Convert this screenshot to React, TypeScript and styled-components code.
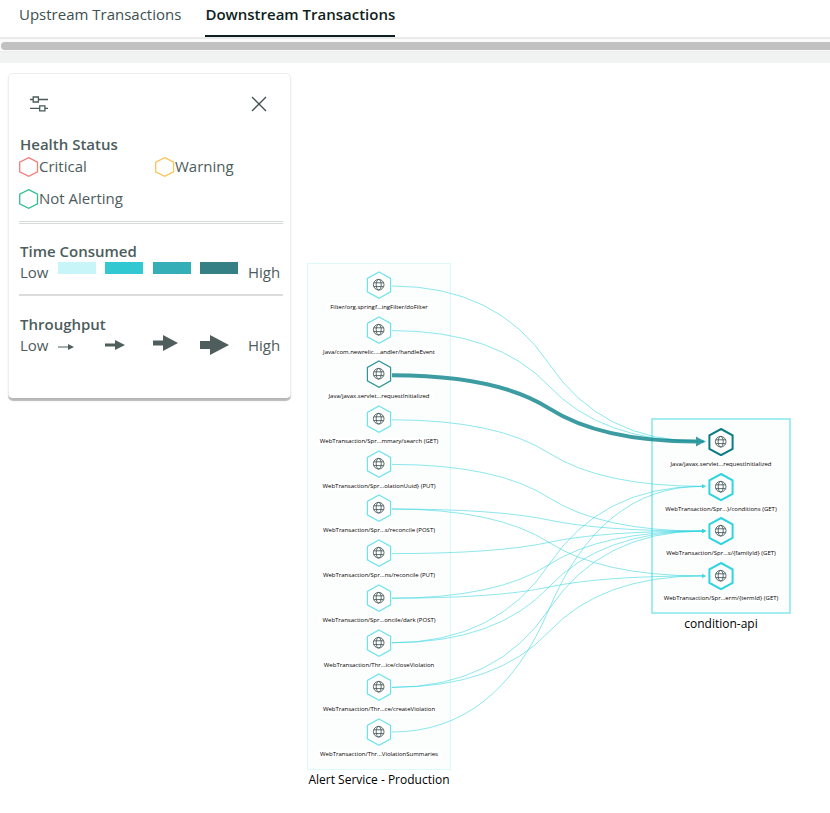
import React from "react";
import styled, { createGlobalStyle } from "styled-components";

const GlobalStyle = createGlobalStyle`
  * { box-sizing: border-box; }
  body {
    margin: 0;
    background: #fff;
    font-family: "Open Sans", "Noto Sans", sans-serif;
    overflow: hidden;
  }
  button { font: inherit; background: none; border: 0; padding: 0; cursor: pointer; }
  h2, p, ul { margin: 0; padding: 0; }
`;

const Page = styled.div`
  display: flex;
  flex-direction: column;
  min-height: 100vh;
`;

const Tabs = styled.nav`
  display: flex;
  gap: 24px;
  height: 39px;
  padding-left: 19px;
  border-bottom: 2px solid #e9ebeb;
`;

const Tab = styled.button<{ $active?: boolean }>`
  && {
    height: 37px;
    padding-bottom: 8px;
    border-bottom: 2px solid ${(p) => (p.$active ? "#0f1e21" : "transparent")};
    color: ${(p) => (p.$active ? "#0f1e21" : "#3d4f4f")};
    font-size: 15px;
    font-weight: ${(p) => (p.$active ? 600 : 400)};
    white-space: nowrap;
  }
`;

const ScrollTrack = styled.div`
  height: 13px;
  padding: 3px 0 2px 1px;
  background: #fafafa;
  border-bottom: 1px solid #ececec;
`;

const ScrollThumb = styled.div`
  height: 8px;
  border-radius: 4px 0 0 4px;
  background: #c1c1c1;
`;

const Strip = styled.div`
  height: 11px;
  background: #f1f3f3;
`;

const Canvas = styled.main`
  position: relative;
  flex: 1;
`;

const Legend = styled.aside`
  position: absolute;
  left: 8px;
  top: 10px;
  width: 283px;
  padding: 11px 7px 43px 10px;
  border: 1px solid #eceeee;
  border-bottom: 1px solid #b4b6b6;
  border-radius: 5px;
  background: #fff;
  box-shadow: 0 2px 1px #b9bbbb;
  color: #4d5c5c;
`;

const LegendHead = styled.div`
  display: flex;
  justify-content: space-between;
  align-items: center;
  height: 38px;
  padding: 0 16px 0 11px;
  margin-bottom: 10px;
`;

const IconButton = styled.button`
  display: flex;
`;

const Section = styled.section<{ $kind: "first" | "middle" | "last" }>`
  padding-top: ${(p) => (p.$kind === "first" ? 0 : p.$kind === "middle" ? 16 : 17)}px;
  padding-bottom: ${(p) => (p.$kind === "last" ? 0 : 12)}px;
  border-bottom: ${(p) =>
    p.$kind === "first" ? "3px double #d5dada" : p.$kind === "middle" ? "2px solid #dcdcdc" : "0"};
`;

const Heading = styled.h2`
  padding-left: 1px;
  font-size: 15px;
  line-height: 22px;
  font-weight: 600;
`;

const StatusGrid = styled.ul`
  display: grid;
  grid-template-columns: 136px 1fr;
  row-gap: 10px;
  list-style: none;
`;

const Status = styled.li`
  display: flex;
  align-items: center;
  height: 22px;
  font-size: 15px;
  line-height: 20px;
  padding-bottom: 1px;
  white-space: nowrap;
  svg { flex: none; margin-top: 2px; }
`;

const Scale = styled.div`
  display: grid;
  grid-template-columns: 38px 47px 48px 47px 48px 1fr;
  height: 20px;
  padding-left: 1px;
  font-size: 15px;
  line-height: 20px;
`;

const Swatch = styled.span<{ $color: string }>`
  width: 38px;
  height: 12px;
  background: ${(p) => p.$color};
`;

const ArrowCell = styled.span`
  display: flex;
  align-items: center;
  height: 20px;
`;

const LowArrowCell = styled(ArrowCell)`
  padding-top: 4px;
`;

const HighArrowCell = styled(ArrowCell)`
  padding-bottom: 4px;
`;

const Edges = styled.svg`
  position: absolute;
  left: 0;
  top: 0;
  pointer-events: none;
`;

const Cluster = styled.section<{ $target?: boolean }>`
  position: absolute;
  left: ${(p) => (p.$target ? 651 : 307)}px;
  top: ${(p) => (p.$target ? 355 : 200)}px;
  width: ${(p) => (p.$target ? 140 : 144)}px;
`;

const ClusterBox = styled.div<{ $target?: boolean }>`
  display: flex;
  flex-direction: column;
  align-items: center;
  justify-content: space-between;
  height: ${(p) => (p.$target ? 196 : 507)}px;
  padding: ${(p) => (p.$target ? "8px 0 10px" : "7px 0 11px")};
  border: ${(p) => (p.$target ? "2px solid #a4ecf0" : "1px solid #dcf8fa")};
  background: #fcfefe;
`;

const ClusterName = styled.p`
  text-align: center;
  color: #000;
  font-size: 12px;
  line-height: 20px;
  white-space: nowrap;
`;

const NodeItem = styled.div`
  display: flex;
  flex-direction: column;
  align-items: center;
  gap: 4px;
`;

const NodeLabel = styled.span`
  padding: 0 3px;
  background: #fff;
  color: #000;
  font-size: 6px;
  line-height: 8px;
  white-space: nowrap;
`;

const sources = [
  "Filter/org.springf...ingFilter/doFilter",
  "Java/com.newrelic....andler/handleEvent",
  "Java/javax.servlet...requestInitialized",
  "WebTransaction/Spr...mmary/search (GET)",
  "WebTransaction/Spr...olationUuid} (PUT)",
  "WebTransaction/Spr...s/reconcile (POST)",
  "WebTransaction/Spr...ns/reconcile (PUT)",
  "WebTransaction/Spr...oncile/dark (POST)",
  "WebTransaction/Thr...ice/closeViolation",
  "WebTransaction/Thr...ce/createViolation",
  "WebTransaction/Thr...ViolationSummaries",
];

const targets = [
  "Java/javax.servlet...requestInitialized",
  "WebTransaction/Spr...}/conditions (GET)",
  "WebTransaction/Spr...s/{familyId} (GET)",
  "WebTransaction/Spr...erm/{termId} (GET)",
];

const links: [number, number][] = [
  [0, 0], [1, 0], [3, 1], [4, 2], [5, 2], [5, 3], [6, 2], [7, 2],
  [7, 3], [8, 1], [8, 2], [9, 2], [9, 3], [10, 1], [2, 0],
];

const sourceY = (i: number) => 223 + i * 44.6;
const targetY = (i: number) => 378.5 + i * 44.8;

function linkPath(from: number, to: number, endX: number) {
  const y0 = sourceY(from);
  const y1 = targetY(to);
  return `M392 ${y0}Q497 ${y0} 549 ${(y0 + y1) / 2}Q601 ${y1} ${endX} ${y1}`;
}

function NodeIcon({ color, width }: { color: string; width: number }) {
  return (
    <svg width="26" height="28" viewBox="0 0 26 28" aria-hidden="true">
      <path
        d="M13 1 24.6 7.4V20.8L13 27.2 1.4 20.8V7.4Z"
        fill="#fff"
        stroke={color}
        strokeWidth={width}
      />
      <g fill="none" stroke="#4a5b5b" strokeWidth="0.9">
        <circle cx="12.7" cy="13.7" r="5.3" />
        <ellipse cx="12.7" cy="13.7" rx="2.5" ry="5.3" />
        <path d="M7.8 11.8H17.6M7.8 15.6H17.6" />
      </g>
    </svg>
  );
}

function StatusIcon({ color }: { color: string }) {
  return (
    <svg width="20" height="20" viewBox="0 0 20 20" aria-hidden="true">
      <path d="M9.7 .7 18.5 5.2V14.8L9.7 19.3 .7 14.8V5.2Z" fill="none" stroke={color} strokeWidth="1.3" />
    </svg>
  );
}

function Arrow({ width, height, stem, head }: { width: number; height: number; stem: number; head: number }) {
  const mid = height / 2;
  const neck = width - head;
  return (
    <svg width={width} height={height} aria-hidden="true">
      <path
        d={`M0 ${mid - stem / 2}H${neck}V0L${width} ${mid}L${neck} ${height}V${mid + stem / 2}H0Z`}
        fill="#4f5d5d"
      />
    </svg>
  );
}

export default function App() {
  return (
    <Page>
      <GlobalStyle />
      <Tabs role="tablist">
        <Tab role="tab" aria-selected={false}>Upstream Transactions</Tab>
        <Tab role="tab" aria-selected $active>Downstream Transactions</Tab>
      </Tabs>
      <ScrollTrack>
        <ScrollThumb />
      </ScrollTrack>
      <Strip />
      <Canvas>
        <Cluster>
          <ClusterBox>
            {sources.map((label, i) => (
              <NodeItem key={label}>
                <NodeIcon color={i === 2 ? "#2d959b" : "#6fe3ea"} width={1.2} />
                <NodeLabel>{label}</NodeLabel>
              </NodeItem>
            ))}
          </ClusterBox>
          <ClusterName>Alert Service - Production</ClusterName>
        </Cluster>
        <Cluster $target>
          <ClusterBox $target>
            {targets.map((label, i) => (
              <NodeItem key={label}>
                <NodeIcon color={i === 0 ? "#0b7c84" : "#2fd4de"} width={2} />
                <NodeLabel>{label}</NodeLabel>
              </NodeItem>
            ))}
          </ClusterBox>
          <ClusterName>condition-api</ClusterName>
        </Cluster>
        <Edges width="830" height="750" viewBox="0 0 830 750" aria-hidden="true">
          {links.map(([from, to]) => {
            const main = from === 2;
            const color = main ? "#0b8389" : "#2fd4de";
            const y = targetY(to);
            return (
              <g key={`${from}-${to}`}>
                <path
                  d={linkPath(from, to, main ? 696 : 702)}
                  fill="none"
                  stroke={color}
                  strokeOpacity={main ? 0.8 : 0.55}
                  strokeWidth={main ? 4 : 1}
                />
                <path
                  d={main ? `M696 ${y - 5}L705 ${y}L696 ${y + 5}Z` : `M702 ${y - 2}L706 ${y}L702 ${y + 2}Z`}
                  fill={color}
                  fillOpacity={main ? 0.8 : 0.55}
                />
              </g>
            );
          })}
        </Edges>
        <Legend>
          <LegendHead>
            <IconButton aria-label="Settings">
              <svg width="18" height="16" viewBox="0 0 18 16" fill="none" stroke="#4a5959" strokeWidth="1.3">
                <path d="M0 3.5H3M8.5 3.5H18M0 12.3H9.5M15 12.3H18" />
                <path d="M3.2 1H8.4V6H3.2ZM9.7 9.8H14.9V14.8H9.7Z" />
              </svg>
            </IconButton>
            <IconButton aria-label="Close">
              <svg width="16" height="16" viewBox="0 0 16 16" fill="none" stroke="#3f5050" strokeWidth="1.3">
                <path d="M1 1 15 15M15 1 1 15" />
              </svg>
            </IconButton>
          </LegendHead>
          <Section $kind="first">
            <Heading>Health Status</Heading>
            <StatusGrid>
              <Status><StatusIcon color="#f47e78" />Critical</Status>
              <Status><StatusIcon color="#f9c55a" />Warning</Status>
              <Status><StatusIcon color="#35bd93" />Not Alerting</Status>
            </StatusGrid>
          </Section>
          <Section $kind="middle">
            <Heading>Time Consumed</Heading>
            <Scale>
              <span>Low</span>
              <Swatch $color="#c8f6f8" />
              <Swatch $color="#32c8d1" />
              <Swatch $color="#34afb8" />
              <Swatch $color="#358084" />
              <span>High</span>
            </Scale>
          </Section>
          <Section $kind="last">
            <Heading>Throughput</Heading>
            <Scale>
              <span>Low</span>
              <LowArrowCell><Arrow width={16} height={6} stem={1} head={6} /></LowArrowCell>
              <ArrowCell><Arrow width={20} height={10} stem={3} head={10} /></ArrowCell>
              <HighArrowCell><Arrow width={25} height={16} stem={5} head={15} /></HighArrowCell>
              <ArrowCell><Arrow width={29} height={20} stem={8} head={19} /></ArrowCell>
              <span>High</span>
            </Scale>
          </Section>
        </Legend>
      </Canvas>
    </Page>
  );
}
